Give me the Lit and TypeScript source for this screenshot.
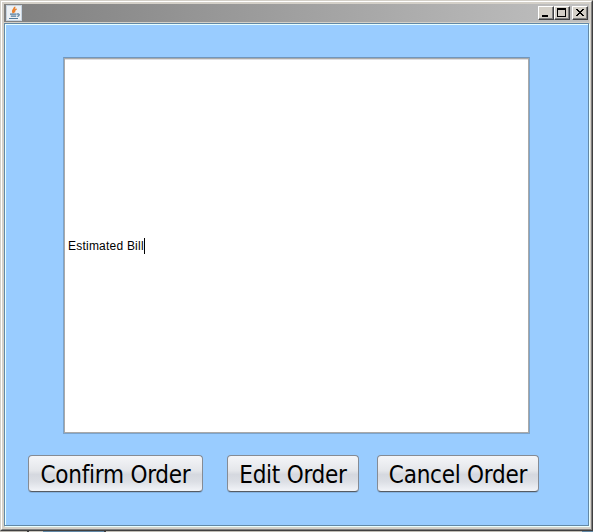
import { LitElement, html, css, svg } from "lit";
import { customElement, property } from "lit/decorators.js";

@customElement("order-button")
class OrderButton extends LitElement {
  @property() label = "";
  static styles = css`
    :host { display: block; }
    button {
      display: flex; align-items: center; justify-content: center;
      box-sizing: border-box; width: 100%; height: 37px; padding: 2px 0 0;
      border: 1px solid #858b94; border-bottom-color: #555b63; border-radius: 4px;
      background: linear-gradient(#f4f5f8 0%, #e4e6ea 42%, #d5d8df 53%, #dbdee4 72%, #f2f4f8 100%);
      box-shadow: 0 1px 0 #86b3e0;
      color: #000; font: 24px "DejaVu Sans Condensed", "DejaVu Sans", sans-serif;
      font-stretch: condensed; letter-spacing: -0.25px; white-space: nowrap;
    }
  `;
  render() {
    return html`<button>${this.label}</button>`;
  }
}

@customElement("app-root")
class AppRoot extends LitElement {
  static styles = css`
    :host { display: flex; flex-direction: column; width: 593px; height: 532px; overflow: hidden; background: #404040; }
    .window {
      box-sizing: border-box; height: 531px; background: #d4d0c8;
      border: 1px solid #d4d0c8; border-right-color: #404040; border-bottom-color: #404040;
    }
    .bevel {
      box-sizing: border-box; height: 529px; padding: 2px 2px 3px 2px;
      border: 1px solid #fff; border-right-color: #808080; border-bottom-color: #808080;
      display: flex; flex-direction: column;
    }
    .title {
      box-sizing: border-box; height: 18px; margin-bottom: 1px; padding: 0 1px 0 2px;
      display: flex; align-items: center;
      background: linear-gradient(90deg, #808080, #c0c0c0);
    }
    .java { width: 16px; height: 16px; margin-right: auto; }
    .control {
      box-sizing: border-box; width: 16px; height: 14px; background: #d4d0c8;
      border: 1px solid #fff; border-right-color: #404040; border-bottom-color: #404040;
      box-shadow: inset -1px -1px #808080;
    }
    .control svg { display: block; width: 14px; height: 12px; }
    .close { margin-left: 2px; }
    .content {
      box-sizing: border-box; flex: 1; padding: 33px 0 0 23px;
      background: #99ccff; border: 1px solid #6288a6;
      box-shadow: inset 1px 1px #e8ffff, 1px 1px #e8ffff;
    }
    .bill {
      box-sizing: border-box; width: 467px; height: 377px; margin-left: 35px; padding-left: 4px;
      display: flex; align-items: center;
      background: #fff; border: 1px solid #7ba3cb; border-top-color: #7096bd;
      box-shadow: inset 0 0 0 1px #aaa9a8, inset 0 2px #dedfe3;
      color: #000; font: 12px "Liberation Sans", Arial, sans-serif; letter-spacing: 0.22px;
    }
    .caret { width: 1px; height: 16px; background: #000; }
    .actions { display: flex; margin-top: 21px; }
    .confirm { width: 175px; }
    .edit { width: 132px; margin-left: 24px; }
    .cancel { width: 162px; margin-left: 18px; }
    .behind { height: 1px; background: linear-gradient(90deg, #b8b5ae 27px, #404040 27px 29px, #c9c6bf 29px 43px, #6288a6 43px 104px, #404040 104px 106px, #c0bdb5 106px 582px, #6288a6 582px); }
  `;

  render() {
    return html`
      <div class="window"><div class="bevel">
        <div class="title">
          <svg class="java" viewBox="0 0 16 16">
            <rect width="16" height="16" rx="1" fill="#edf1f5" />
            <path d="M.5 .5h15v15H.5z" fill="none" stroke="#c5d3e1" />
            <path d="M8.6 1.8C9.5 4 5 4.6 7.4 8.2M10.6 4C8.2 5 8 6 8.8 7.4" fill="none" stroke="#e9802c" stroke-width="1.6" />
            <path d="M4 9.2h6.6M4.8 11.2h5.4M3 13.5h9M11 9.1c3-.9 2.8 1.8.3 2.3" fill="none" stroke="#527b9c" stroke-width="1.2" />
          </svg>
          ${[
            svg`<path d="M3 8h6v2H3z" />`,
            svg`<path d="M2 1h9v9H2zM3 3v6h7V3z" fill-rule="evenodd" />`,
            svg`<path d="M3 2h2v1h1v1h2V3h1V2h2v1h-1v1H9v1H8v1h1v1h1v1h1v1H9V8H8V7H6v1H5v1H3V8h1V7h1V6h1V5H5V4H4V3H3z" />`,
          ].map((glyph, i) => html`<div class="control ${i === 2 ? "close" : ""}">
            <svg viewBox="0 0 14 12" shape-rendering="crispEdges">${glyph}</svg></div>`)}
        </div>
        <div class="content">
          <div class="bill"><span>Estimated Bill</span><span class="caret"></span></div>
          <div class="actions">
            <order-button class="confirm" label="Confirm Order"></order-button>
            <order-button class="edit" label="Edit Order"></order-button>
            <order-button class="cancel" label="Cancel Order"></order-button>
          </div>
        </div>
      </div></div>
      <div class="behind"></div>
    `;
  }
}
